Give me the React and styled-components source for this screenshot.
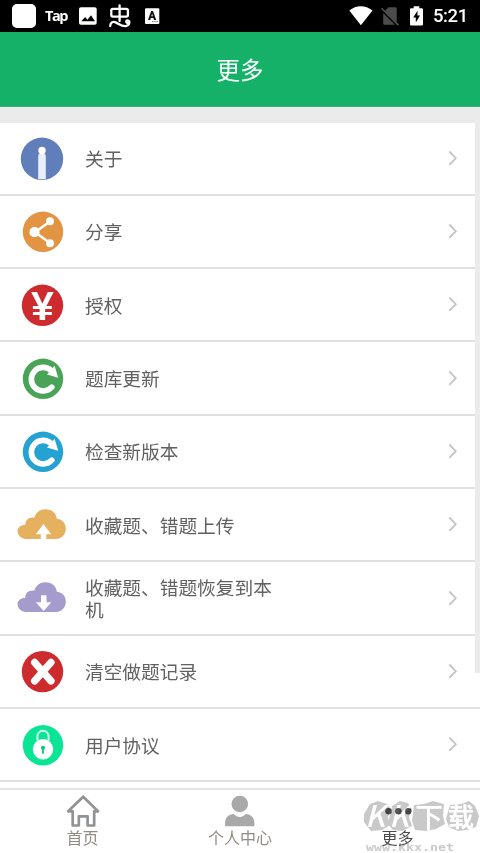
import React from 'react';
import styled, { createGlobalStyle } from 'styled-components';

const GlobalStyle = createGlobalStyle`
  * {
    box-sizing: border-box;
  }

  body {
    margin: 0;
    background-color: #fff;
    font-family: "Noto Sans CJK SC", sans-serif;
  }
`;

const Screen = styled.div`
  position: relative;
  display: flex;
  flex-direction: column;
  width: 480px;
  height: 853px;
  overflow: hidden;
  background-color: #fff;
`;

const StatusBar = styled.div`
  display: flex;
  align-items: center;
  justify-content: space-between;
  flex: none;
  height: 32px;
  padding: 0 11px 0 12px;
  background-color: #000;
  color: #fff;
`;

const StatusGroup = styled.div`
  display: flex;
  align-items: center;
  height: 32px;
`;

const AppSquare = styled.div`
  width: 24px;
  height: 24px;
  margin-right: 9px;
  border-radius: 5px;
  background-color: #fff;
`;

const TapLogo = styled.span`
  width: 25px;
  margin-right: 9px;
  font-family: "Open Sans", sans-serif;
  font-size: 14.5px;
  font-weight: 700;
  letter-spacing: -1.4px;
  line-height: 31px;
  height: 32px;
`;

const StatusIcon = styled.svg`
  flex: none;
  width: ${(props) => props.$width}px;
  height: 32px;
  margin-right: ${(props) => props.$gap || 0}px;
`;

const Clock = styled.span`
  width: 36px;
  font-family: Roboto, sans-serif;
  font-size: 18.5px;
  font-weight: 500;
  letter-spacing: -0.4px;
  line-height: 34px;
  white-space: nowrap;
`;

const Header = styled.header`
  display: flex;
  align-items: center;
  justify-content: center;
  flex: none;
  height: 75px;
  border-bottom: 1px solid #3fa878;
  background-color: #16b168;
  color: #fff;
  font-size: 23.5px;
  line-height: 74px;
`;

const Content = styled.main`
  display: flex;
  flex: none;
  height: 681px;
  overflow: hidden;
`;

const Column = styled.div`
  flex: 1;
  padding-top: 15.5px;
  background: linear-gradient(#ebebeb 15.5px, #fff 15.5px);
`;

const ScrollTrack = styled.div`
  width: 5px;
  margin-left: -5px;
  z-index: 1;
`;

const ScrollThumb = styled.div`
  height: 566px;
  background-color: #ebebeb;
`;

const Row = styled.div`
  display: flex;
  align-items: center;
  height: 73.32px;
  padding: 0 21px 0 17px;
  border-bottom: 2px solid #e0e0e0;
`;

const RowIcon = styled.svg`
  flex: none;
  width: 50px;
  height: 44px;
  overflow: visible;
`;

const Label = styled.div`
  width: 200px;
  margin-left: 18px;
  color: #616161;
  font-size: 18.7px;
  line-height: 22px;
`;

const Chevron = styled.svg`
  width: 12px;
  height: 18px;
  margin: -1px 0 0 auto;
`;

const TabBar = styled.nav`
  display: grid;
  grid-template-columns: 165px 150px 165px;
  flex: 1;
  border-top: 2px solid #e6e6e6;
`;

const Tab = styled.div`
  display: flex;
  flex-direction: column;
  align-items: center;
  padding-top: 4px;
  color: ${(props) => (props.$active ? '#4c4c4c' : '#928b82')};
  font-size: 16px;
  line-height: 22px;
`;

const TabIcon = styled.svg`
  width: 34px;
  height: 34px;
  margin-bottom: -2px;
`;

const Watermark = styled.svg`
  position: absolute;
  left: 360px;
  top: 796px;
  width: 120px;
  height: 57px;
  mix-blend-mode: multiply;
`;

const InfoIcon = () => (
  <RowIcon viewBox="0 0 50 44">
    <circle cx="25" cy="22.8" r="21.2" fill="#607eba" />
    <path d="M21.2 43.3V20.6a3.8 3.8 0 0 1 7.6 0v22.7z" fill="#e9eefb" />
    <circle cx="25" cy="14.5" r="3.7" fill="#fff" />
  </RowIcon>
);

const ShareIcon = () => (
  <RowIcon viewBox="0 0 50 44">
    <circle cx="26" cy="22.8" r="20.2" fill="#e29443" />
    <path d="M33 12.5 18 23.2 33 34" fill="none" stroke="#fff" strokeWidth="2.4" />
    <circle cx="17.5" cy="23.2" r="5.1" fill="#fff" />
    <circle cx="33" cy="12.3" r="4" fill="#fff" />
    <circle cx="33" cy="34.2" r="4" fill="#fff" />
  </RowIcon>
);

const YenIcon = () => (
  <RowIcon viewBox="0 0 50 44">
    <circle cx="25.5" cy="22.3" r="20.7" fill="#cd2b2d" />
    <text x="25.5" y="37" textAnchor="middle" fontFamily="Liberation Sans, sans-serif" fontWeight="700" fontSize="41" fill="#fff">¥</text>
  </RowIcon>
);

const RefreshIcon = ({ color }) => (
  <RowIcon viewBox="0 0 50 44">
    <circle cx="26" cy="22.8" r="20.2" fill={color} />
    <path d="M34.8 31.2A11.8 11.8 0 1 1 34 14.4" fill="none" stroke="#fff" strokeWidth="5.6" strokeLinecap="round" />
    <path d="M37.6 9.8 41.2 21.8 30 18.6z" fill="#fff" />
  </RowIcon>
);

const cloudPath = 'M8.5 37A8 8 0 0 1 .5 29.5C.5 25.5 4 22.8 8.3 23.1 8.2 18 12 14.8 17.2 15.7 19 10.3 23 7.2 28.4 7.2 35 7.2 39.5 11.3 39.8 16.7 45 17 48.8 21 48.8 26.5 48.8 32.5 44.5 37 38.8 37z';

const UploadIcon = () => (
  <RowIcon viewBox="0 1 50 44">
    <path d={cloudPath} fill="#e6b15f" />
    <path d="M26.5 22 34.2 32.2H29.3V37.4H23.8V32.2H18.8z" fill="#fff" />
  </RowIcon>
);

const DownloadIcon = () => (
  <RowIcon viewBox="0 1 50 44">
    <path d={cloudPath} fill="#a59bcd" />
    <path d="M26.7 36 34.3 27.2H29.5V20.2H24V27.2H18.8z" fill="#fff" />
  </RowIcon>
);

const ClearIcon = () => (
  <RowIcon viewBox="0 0 50 44">
    <circle cx="25.5" cy="22.6" r="20.7" fill="#cd2b2d" />
    <path d="m17.6 13.4 16.4 18.6M34 13.4 17.6 32" stroke="#fff" strokeWidth="7.2" strokeLinecap="round" />
  </RowIcon>
);

const LockIcon = () => (
  <RowIcon viewBox="0 0 50 44">
    <circle cx="26" cy="22.3" r="20.2" fill="#09e595" />
    <path d="M20.4 17.5v-4.2a5.6 5.6 0 0 1 11.2 0v4.2" fill="none" stroke="#d8fff0" strokeWidth="2" />
    <circle cx="26" cy="26.3" r="10.2" fill="#fff" />
    <circle cx="26" cy="24.8" r="2.1" fill="#09c783" />
    <path d="M26 25v5" stroke="#09c783" strokeWidth="1.8" strokeLinecap="round" />
  </RowIcon>
);

const menuItems = [
  { label: '关于', icon: <InfoIcon /> },
  { label: '分享', icon: <ShareIcon /> },
  { label: '授权', icon: <YenIcon /> },
  { label: '题库更新', icon: <RefreshIcon color="#4aa457" /> },
  { label: '检查新版本', icon: <RefreshIcon color="#25a1d2" /> },
  { label: '收藏题、错题上传', icon: <UploadIcon /> },
  { label: '收藏题、错题恢复到本机', icon: <DownloadIcon /> },
  { label: '清空做题记录', icon: <ClearIcon /> },
  { label: '用户协议', icon: <LockIcon /> },
];

const StatusIcons = () => (
  <StatusBar>
    <StatusGroup>
      <AppSquare />
      <TapLogo>Tap</TapLogo>
      <StatusIcon $width={18} $gap={12} viewBox="0 0 18 32">
        <rect y="7.3" width="17.7" height="17.5" rx="2" fill="#fff" />
        <path d="m2.3 21.3 3.8-4.2 2.4 2.6 3.5-4.5 4 6.1z" fill="#000" />
      </StatusIcon>
      <StatusIcon $width={22} $gap={14} viewBox="0 0 22 32">
        <g fill="none" stroke="#fff" strokeWidth="2.3" strokeLinecap="round" strokeLinejoin="round">
          <rect x="2.3" y="8.8" width="16.6" height="7.8" rx="1.6" />
          <path d="M10.6 5.5v15.6M1.2 26c.2-3.6 2.8-5 6-3.4 3.6 1.9 6.2 4 9.8 3.4 4-.8 4.2-5.6 1.6-5.7-2.1 0-1.5 2.8-.2 2.5" />
        </g>
      </StatusIcon>
      <StatusIcon $width={15} viewBox="0 0 15 32">
        <rect x="0" y="8.2" width="14.3" height="15.8" rx="1" fill="#fff" />
        <text x="7" y="20" textAnchor="middle" fontFamily="Roboto, sans-serif" fontWeight="900" fontSize="12" fill="#111">A</text>
        <path d="M7 21.6h6" stroke="#777" strokeWidth="1" strokeDasharray="1.5 .7" />
      </StatusIcon>
    </StatusGroup>
    <StatusGroup>
      <StatusIcon $width={24} $gap={8} viewBox="0 0 24 32">
        <path d="M.3 10.5C7.2 4.8 16.5 4.8 23.5 10.5L11.9 25.3z" fill="#fff" />
      </StatusIcon>
      <StatusIcon $width={18} $gap={11} viewBox="0 0 18 32">
        <path d="M7.5 7.3h7.2a1 1 0 0 1 1 1v15.4a1 1 0 0 1-1 1H3.2a1 1 0 0 1-1-1V12.5z" fill="#4c4c4c" />
        <path d="m0 8.8 17 17" stroke="#000" strokeWidth="3" />
        <path d="m.5 8.2 17 17" stroke="#555" strokeWidth="1.6" />
      </StatusIcon>
      <StatusIcon $width={14} $gap={9} viewBox="0 0 14 32">
        <path d="M3.7 6.2h5.6v2h2.4a1.3 1.3 0 0 1 1.3 1.3v14.7a1.3 1.3 0 0 1-1.3 1.3H1.3A1.3 1.3 0 0 1 0 24.2V9.5a1.3 1.3 0 0 1 1.3-1.3h2.4z" fill="#fff" />
        <path d="M7.5 10.8 3.2 17.6h2.6v5l4.3-7.1H7.5z" fill="#000" />
      </StatusIcon>
      <Clock>5:21</Clock>
    </StatusGroup>
  </StatusBar>
);

const App = () => (
  <>
    <GlobalStyle />
    <Screen>
      <StatusIcons />
      <Header>更多</Header>
      <Content>
        <Column>
          {menuItems.map((item) => (
            <Row key={item.label}>
              {item.icon}
              <Label>{item.label}</Label>
              <Chevron viewBox="0 0 12 18">
                <path d="m2.3 2.5 6.5 6.7-6.5 6.7" fill="none" stroke="#c4c4c4" strokeWidth="1.8" />
              </Chevron>
            </Row>
          ))}
        </Column>
        <ScrollTrack>
          <ScrollThumb />
        </ScrollTrack>
      </Content>
      <TabBar>
        <Tab>
          <TabIcon viewBox="0 0 34 34">
            <path d="M2.2 17.3 17.2 2.7 32 17.3H28.2V31.5H21.6V22.3H12.8V31.5H6.7V17.3z" fill="none" stroke="#929494" strokeWidth="2.7" strokeLinejoin="round" />
          </TabIcon>
          首页
        </Tab>
        <Tab>
          <TabIcon viewBox="0 0 34 34">
            <circle cx="16.8" cy="10" r="8.3" fill="#a9a9a9" />
            <path d="M2.1 32.3V29C2.1 23.5 6 20 10.8 20.1 14.3 23.9 19.3 23.9 22.7 20.1 27.5 20 31.4 23.5 31.4 29v3.3z" fill="#a9a9a9" />
          </TabIcon>
          个人中心
        </Tab>
        <Tab $active>
          <TabIcon viewBox="0 0 34 34">
            <circle cx="7.5" cy="17.3" r="3.2" fill="#555" />
            <circle cx="17.4" cy="17.3" r="3.2" fill="#555" />
            <circle cx="27.3" cy="17.3" r="3.2" fill="#555" />
          </TabIcon>
          更多
        </Tab>
      </TabBar>
      <Watermark viewBox="0 0 120 57">
        <g fill="#c9c9c9">
          <path d="M10 8 18 5 27 8 31 13 28 21 30 29 22 34 11 35 7 30 4 26 4 18z" />
          <path d="M32 10 40 5 48 7 52 13 49 21 52 30 42 35 33 34 28 28 30 19z" />
          <path d="M54 9 64 8 73 5 84 8 83 20 85 28 76 33 66 35 55 34 52 25z" />
          <path d="M90 9 101 8 109 5 115 10 119 20 116 31 107 34 98 35 89 31 86 23z" />
        </g>
        <g fill="#fff" fontFamily="Noto Sans CJK SC, sans-serif" fontSize="30">
          <text x="5" y="31" fontStyle="italic" fontWeight="500">K</text>
          <text x="29" y="31" fontStyle="italic" fontWeight="500">K</text>
          <text x="55" y="31.5" fontSize="28" fontWeight="500">下</text>
          <text x="88" y="31" fontSize="26" fontWeight="700">载</text>
        </g>
        <text x="6" y="55" textLength="88" lengthAdjust="spacingAndGlyphs" fontFamily="DejaVu Sans Mono, monospace" fontWeight="700" fontSize="10.5" fill="#cbcbcb">www.kkx.net</text>
      </Watermark>
    </Screen>
  </>
);

export default App;
